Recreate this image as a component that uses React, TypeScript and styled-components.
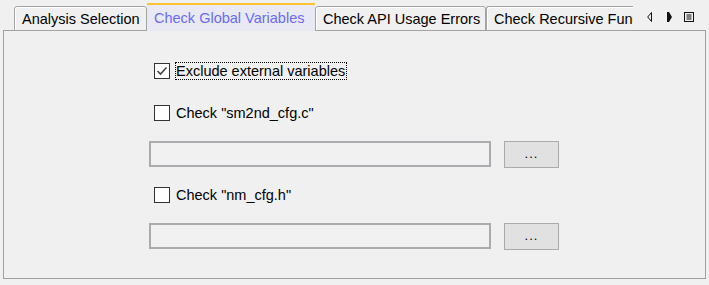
import React from "react";
import styled, { createGlobalStyle } from "styled-components";

const GlobalStyle = createGlobalStyle`
    html, body {
        margin: 0;
        padding: 0;
        background: #f0f0f0;
    }
    body {
        font-family: "Liberation Sans", Arial, sans-serif;
        font-size: 14.5px;
        color: #000;
    }
`;

const Frame = styled.div`
    width: 709px;
    height: 285px;
    background: #f0f0f0;
    display: flex;
    flex-direction: column;
    overflow: hidden;
`;

const TabBar = styled.div`
    display: flex;
    align-items: flex-end;
    height: 30px;
    padding-left: 14px;
    position: relative;
    z-index: 1;
`;

const TabViewport = styled.div`
    display: flex;
    align-items: flex-end;
    width: 619px;
    height: 31px;
    margin-bottom: -1px;
    overflow: hidden;
    flex-shrink: 0;
`;

const Tab = styled.div<{ $active?: boolean; $w: number; $open?: boolean }>`
    box-sizing: border-box;
    flex-shrink: 0;
    width: ${(p) => p.$w}px;
    height: ${(p) => (p.$active ? 28 : 25)}px;
    padding: 0 7px;
    display: flex;
    align-items: center;
    white-space: nowrap;
    overflow: hidden;
    background: ${(p) => (p.$active ? "#e9e9f3" : "#f0f0f0")};
    color: ${(p) => (p.$active ? "#6b6bf5" : "#000")};
    border-top: ${(p) => (p.$active ? "2px solid #fcc235" : "1px solid #a3a3a3")};
    border-left: ${(p) => (p.$active ? "none" : "1px solid #a3a3a3")};
    border-right: ${(p) => (p.$active || p.$open ? "none" : "1px solid #a3a3a3")};
    border-bottom: ${(p) => (p.$active ? "none" : "1px solid #a3a3a3")};
    border-radius: ${(p) => (p.$active ? "0" : "3px 3px 0 0")};
    box-shadow: ${(p) => (p.$active ? "none" : "inset 1px 1px 0 #ffffff")};
    padding-top: ${(p) => (p.$active ? "0" : "1px")};
`;

const TabControls = styled.div`
    display: flex;
    align-items: center;
    height: 30px;
    padding: 3px 0 0 14px;
    box-sizing: border-box;
`;

const ControlIcon = styled.svg<{ $gap?: number }>`
    display: block;
    margin-left: ${(p) => p.$gap ?? 0}px;
`;

const Panel = styled.div`
    box-sizing: border-box;
    margin: 0 3px 0 3px;
    width: 703px;
    height: 249px;
    border: 1px solid #a0a0a0;
    padding: 31px 0 0 145px;
    display: flex;
    flex-direction: column;
    align-items: flex-start;
`;

const CheckRow = styled.label<{ $top: number }>`
    display: flex;
    align-items: center;
    gap: 5px;
    height: 18px;
    margin-top: ${(p) => p.$top}px;
    margin-left: 5px;
`;

const Box = styled.span`
    box-sizing: border-box;
    width: 16px;
    height: 16px;
    border: 1px solid #333;
    background: #fff;
    display: flex;
    align-items: center;
    justify-content: center;
`;

const Label = styled.span<{ $focus?: boolean }>`
    box-sizing: border-box;
    height: 18px;
    line-height: 16px;
    padding: 0 1px 0 0;
    border: 1px dotted ${(p) => (p.$focus ? "#000" : "transparent")};
`;

const FieldRow = styled.div<{ $top: number }>`
    display: flex;
    gap: 13px;
    margin-top: ${(p) => p.$top}px;
`;

const TextField = styled.div`
    box-sizing: border-box;
    width: 342px;
    height: 26px;
    border: 2px solid #abaaaf;
    background: #f1f1f1;
`;

const BrowseButton = styled.button`
    box-sizing: border-box;
    width: 55px;
    height: 27px;
    border: 1px solid #ababab;
    background: #e1e1e1;
    font-family: inherit;
    font-size: 13px;
    padding: 0 0 2px 0;
    color: #000;
    letter-spacing: 1px;
`;

const tabs = [
    { title: "Analysis Selection", w: 133 },
    { title: "Check Global Variables", w: 168, active: true },
    { title: "Check API Usage Errors", w: 171 },
    { title: "Check Recursive Functions", w: 160, open: true },
];

const Check = ({ checked }: { checked?: boolean }) => (
    <Box>
        {checked && (
            <svg width="12" height="12" viewBox="0 0 12 12">
                <polyline points="1.5,6 4.5,9 10.5,2.5" fill="none" stroke="#444" strokeWidth="1.6" />
            </svg>
        )}
    </Box>
);

export default function App() {
    return (
        <Frame>
            <GlobalStyle />
            <TabBar>
                <TabViewport>
                    {tabs.map((t) => (
                        <Tab key={t.title} $w={t.w} $active={t.active} $open={t.open}>
                            {t.title}
                        </Tab>
                    ))}
                </TabViewport>
                <TabControls>
                    <ControlIcon width="5" height="10" viewBox="0 0 5 10">
                        <polygon points="4.5,0.5 0.7,5 4.5,9.5" fill="none" stroke="#111" strokeWidth="1" />
                    </ControlIcon>
                    <ControlIcon $gap={15} width="5" height="10" viewBox="0 0 5 10">
                        <polygon points="0,0 2,0 5,5 2,10 0,10" fill="#111" />
                    </ControlIcon>
                    <ControlIcon $gap={12} width="10" height="10" viewBox="0 0 10 10">
                        <rect x="0.5" y="0.5" width="9" height="9" fill="none" stroke="#111" />
                        <line x1="2.5" y1="3" x2="7.5" y2="3" stroke="#111" />
                        <line x1="2.5" y1="5" x2="7.5" y2="5" stroke="#111" />
                        <line x1="2.5" y1="7" x2="7.5" y2="7" stroke="#111" />
                    </ControlIcon>
                </TabControls>
            </TabBar>
            <Panel>
                <CheckRow $top={0}>
                    <Check checked />
                    <Label $focus>Exclude external variables</Label>
                </CheckRow>
                <CheckRow $top={24}>
                    <Check />
                    <Label>Check "sm2nd_cfg.c"</Label>
                </CheckRow>
                <FieldRow $top={19}>
                    <TextField />
                    <BrowseButton>...</BrowseButton>
                </FieldRow>
                <CheckRow $top={18}>
                    <Check />
                    <Label>Check "nm_cfg.h"</Label>
                </CheckRow>
                <FieldRow $top={19}>
                    <TextField />
                    <BrowseButton>...</BrowseButton>
                </FieldRow>
            </Panel>
        </Frame>
    );
}
